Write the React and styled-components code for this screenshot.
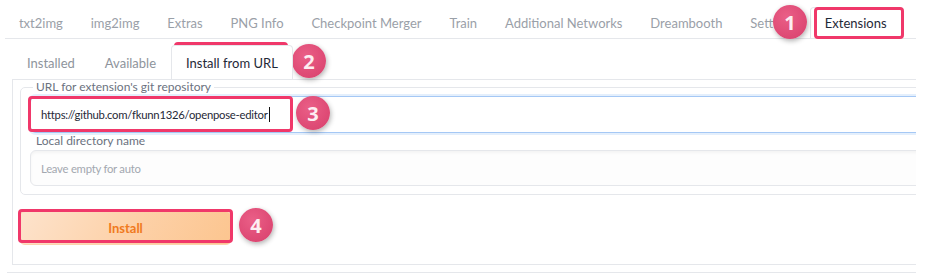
import React from "react"
import styled, { createGlobalStyle } from "styled-components"

const GlobalStyle = createGlobalStyle`
  * { box-sizing: border-box; }
  body {
    margin: 0;
    background: #fff;
    font-family: Lato, "Noto Sans", sans-serif;
  }
`

const Page = styled.div`
  position: relative;
  width: 916px;
  height: 279px;
  overflow: hidden;
  padding-left: 7px;
`

// wider than the page so the right borders fall outside, as in the shot
const Frame = styled.div`
  width: 940px;
`

const TopNav = styled.div`
  display: flex;
  height: 39px;
  padding-top: 7px;
  margin-left: -2px;
  border-bottom: 1px solid #e5e7eb;
`

const TopTab = styled.div`
  height: 31px;
  padding: 0 ${p => (p.active ? "14px" : "12.95px")};
  display: flex;
  align-items: center;
  font-size: 13px;
  color: ${p => (p.active ? "#1f2937" : "#9aa0a8")};
  background: ${p => (p.active ? "#fff" : "transparent")};
  border: 1px solid ${p => (p.active ? "#e5e7eb" : "transparent")};
  border-bottom: none;
  border-radius: 4px 4px 0 0;
  white-space: nowrap;
`

const ExtPanel = styled.div`
  padding-bottom: 7px;
  border-bottom: 1px solid #e5e7eb;
`

const SubNav = styled.div`
  display: flex;
  height: 40px;
  padding-top: 6px;
  margin-left: 5px;
`

const SubTab = styled.div`
  position: relative;
  z-index: 1;
  height: 34px;
  padding: 0 14px;
  display: flex;
  align-items: center;
  font-size: 13px;
  color: ${p => (p.active ? "#1f2937" : "#8e949c")};
  background: ${p => (p.active ? "#fff" : "transparent")};
  border: 1px solid ${p => (p.active ? "#e5e7eb" : "transparent")};
  border-bottom: none;
  border-radius: 4px 4px 0 0;
  white-space: nowrap;
`

const Panel = styled.div`
  margin-left: 5px;
  border: 1px solid #e5e7eb;
  padding: 0 0 19px 0;
`

const Group = styled.fieldset`
  margin: 0 0 0 7px;
  padding: 0 9px 8px;
  min-width: 0;
  border: 1px solid #e5e7eb;
  border-radius: 5px;
`

const Legend = styled.legend`
  margin-left: 3px;
  padding: 0 3px;
  font-size: 12px;
  line-height: 14px;
  color: #6b7280;
`

const FieldLabel = styled.div`
  margin-top: 1px;
  font-size: 12px;
  line-height: 14px;
  color: #6b7280;
  padding-left: 6px;
`

const Input = styled.div`
  display: flex;
  align-items: center;
  margin-top: 2px;
  height: ${p => (p.focused ? "37px" : "36px")};
  padding-left: 10px;
  font-size: 11.3px;
  letter-spacing: -0.25px;
  border-radius: 6px;
  border: 1px solid ${p => (p.focused ? "#a5c8f5" : "#e5e7eb")};
  background: ${p => (p.focused ? "#fff" : "#fdfdfd")};
  box-shadow: ${p =>
    p.focused
      ? "0 0 0 2px #e4effc"
      : "inset 0 2px 3px rgba(0,0,0,0.04)"};
  color: ${p => (p.placeholder ? "#a3a8b0" : "#1f2937")};
`

const Caret = styled.span`
  display: inline-block;
  width: 1px;
  height: 15px;
  margin-left: 1px;
  background: #111;
`

const InstallButton = styled.button`
  display: block;
  margin: 16px 0 0 6px;
  width: 213px;
  height: 34px;
  border: 1px solid #fcd3ad;
  border-radius: 6px;
  background: linear-gradient(120deg, #fde3cc 0%, #fdd2aa 50%, #fcc58f 100%);
  color: #f07a1e;
  font-family: Lato, "Noto Sans", sans-serif;
  font-weight: 700;
  font-size: 13px;
`

const Mark = styled.div`
  position: absolute;
  left: ${p => p.x}px;
  top: ${p => p.y}px;
  width: ${p => p.w}px;
  height: ${p => p.h}px;
  border: 3px solid #f0386a;
  border-radius: 4px;
  pointer-events: none;
`

const Badge = styled.div`
  position: absolute;
  left: ${p => p.x - 17}px;
  top: ${p => p.y - 17}px;
  width: 34px;
  height: 34px;
  border-radius: 50%;
  background: radial-gradient(circle at 40% 35%, #ea5f87 0%, #df4b76 60%, #d6416c 100%);
  box-shadow: 1px 2px 5px rgba(0, 0, 0, 0.3);
  display: flex;
  align-items: center;
  justify-content: center;
  color: #fdeef2;
  font-family: "Open Sans", sans-serif;
  font-weight: 700;
  font-size: 20px;
`

const topTabs = [
  "txt2img",
  "img2img",
  "Extras",
  "PNG Info",
  "Checkpoint Merger",
  "Train",
  "Additional Networks",
  "Dreambooth",
  "Settings",
  "Extensions",
]

const subTabs = ["Installed", "Available", "Install from URL"]

const marks = [
  { x: 814, y: 7, w: 90, h: 32 },
  { x: 174, y: 42, w: 114, h: 37 },
  { x: 28, y: 96, w: 265, h: 36 },
  { x: 18, y: 209, w: 215, h: 34 },
]

const badges = [
  { n: 1, x: 790, y: 22 },
  { n: 2, x: 309, y: 61 },
  { n: 3, x: 313, y: 113 },
  { n: 4, x: 256, y: 225 },
]

export default function App() {
  return (
    <Page>
      <GlobalStyle />
      <Frame>
        <TopNav>
          {topTabs.map(t => (
            <TopTab key={t} active={t === "Extensions"}>
              {t}
            </TopTab>
          ))}
        </TopNav>
        <ExtPanel>
          <SubNav>
            {subTabs.map(t => (
              <SubTab key={t} active={t === "Install from URL"}>
                {t}
              </SubTab>
            ))}
          </SubNav>
          <Panel>
            <Group>
              <Legend>URL for extension's git repository</Legend>
              <Input focused>
                https://github.com/fkunn1326/openpose-editor
                <Caret />
              </Input>
              <FieldLabel>Local directory name</FieldLabel>
              <Input placeholder>Leave empty for auto</Input>
            </Group>
            <InstallButton>Install</InstallButton>
          </Panel>
        </ExtPanel>
      </Frame>
      {marks.map((m, i) => (
        <Mark key={i} {...m} />
      ))}
      {badges.map(b => (
        <Badge key={b.n} x={b.x} y={b.y}>
          {b.n}
        </Badge>
      ))}
    </Page>
  )
}
